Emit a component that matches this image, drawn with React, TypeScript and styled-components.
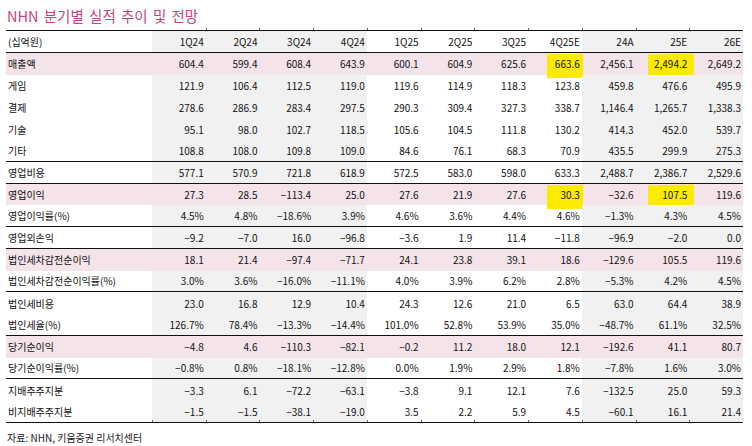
import React from "react";
import styled, { createGlobalStyle, css } from "styled-components";

const GlobalStyle = createGlobalStyle`
  body {
    margin: 0;
    background: #fff;
  }
`;

const COLS = "146px repeat(11, 1fr)";
const GRAY_COLS = [0, 1, 2, 3, 8, 9, 10];

const Page = styled.div`
  width: 752px;
  height: 446px;
  padding: 0 9px 0 6px;
  box-sizing: border-box;
  font-family: "Noto Sans CJK KR", "Noto Sans", sans-serif;
  color: #111;
  overflow: hidden;
`;

const Title = styled.h1`
  margin: 0;
  height: 28px;
  padding: 6px 0 0 1px;
  box-sizing: border-box;
  font-size: 14.5px;
  font-weight: 400;
  line-height: 20px;
  word-spacing: 2px;
  color: #c0457f;
`;

const Ticks = styled.div`
  display: grid;
  grid-template-columns: ${COLS};
  height: 2px;
`;

const Tick = styled.span<{ $on: boolean }>`
  border-left: ${({ $on }) => ($on ? "1px solid #666" : "none")};
`;

const Row = styled.div<{ $pink?: boolean; $line?: boolean; $head?: boolean; $ticks?: boolean }>`
  display: grid;
  grid-template-columns: ${COLS};
  box-sizing: border-box;
  height: ${({ $head }) => ($head ? "23px" : "21.75px")};
  background: ${({ $pink }) => ($pink ? "#f4e4ea" : "transparent")};
  border-top: ${({ $head }) => ($head ? "1px solid #111" : "none")};
  border-bottom: ${({ $line, $head }) => ($line || $head ? "1px solid #111" : "none")};
  ${({ $ticks }) =>
    $ticks &&
    css`
      & > *:not(:first-child)::after {
        content: "";
        position: absolute;
        left: 0;
        bottom: 0;
        width: 1px;
        height: 2px;
        background: #666;
      }
    `}
`;

const Label = styled.div`
  display: flex;
  align-items: center;
  padding-left: 2px;
  font-size: 10px;
  white-space: nowrap;
  position: relative;
`;

const Cell = styled.div<{ $shade: boolean; $mark?: [number, number] }>`
  position: relative;
  display: flex;
  align-items: center;
  justify-content: flex-end;
  padding-right: 2px;
  font-size: 10px;
  white-space: nowrap;
  background: ${({ $shade }) => ($shade ? "#f1f1f1" : "transparent")};
  ${({ $mark }) =>
    $mark &&
    css`
      &::before {
        content: "";
        position: absolute;
        top: 1px;
        bottom: -3px;
        left: ${$mark[0]}px;
        right: ${$mark[1]}px;
        background: #fcea00;
        border-radius: 1px;
        transform: skewY(-1deg);
      }
    `}
`;

const Num = styled.span`
  position: relative;
  z-index: 1;
`;

const Footer = styled.div`
  padding: 8px 0 0 1px;
  font-size: 10px;
  line-height: 14px;
  color: #222;
`;

const HEAD = ["1Q24", "2Q24", "3Q24", "4Q24", "1Q25", "2Q25", "3Q25", "4Q25E", "24A", "25E", "26E"];

type RowData = {
  label: string;
  values: string[];
  pink?: boolean;
  line?: boolean;
  marks?: boolean;
};

const ROWS: RowData[] = [
  { label: "매출액", pink: true, marks: true, values: ["604.4", "599.4", "608.4", "643.9", "600.1", "604.9", "625.6", "663.6", "2,456.1", "2,494.2", "2,649.2"] },
  { label: "게임", values: ["121.9", "106.4", "112.5", "119.0", "119.6", "114.9", "118.3", "123.8", "459.8", "476.6", "495.9"] },
  { label: "결제", values: ["278.6", "286.9", "283.4", "297.5", "290.3", "309.4", "327.3", "338.7", "1,146.4", "1,265.7", "1,338.3"] },
  { label: "기술", values: ["95.1", "98.0", "102.7", "118.5", "105.6", "104.5", "111.8", "130.2", "414.3", "452.0", "539.7"] },
  { label: "기타", line: true, values: ["108.8", "108.0", "109.8", "109.0", "84.6", "76.1", "68.3", "70.9", "435.5", "299.9", "275.3"] },
  { label: "영업비용", line: true, values: ["577.1", "570.9", "721.8", "618.9", "572.5", "583.0", "598.0", "633.3", "2,488.7", "2,386.7", "2,529.6"] },
  { label: "영업이익", pink: true, marks: true, values: ["27.3", "28.5", "−113.4", "25.0", "27.6", "21.9", "27.6", "30.3", "−32.6", "107.5", "119.6"] },
  { label: "영업이익률(%)", line: true, values: ["4.5%", "4.8%", "−18.6%", "3.9%", "4.6%", "3.6%", "4.4%", "4.6%", "−1.3%", "4.3%", "4.5%"] },
  { label: "영업외손익", line: true, values: ["−9.2", "−7.0", "16.0", "−96.8", "−3.6", "1.9", "11.4", "−11.8", "−96.9", "−2.0", "0.0"] },
  { label: "법인세차감전순이익", pink: true, values: ["18.1", "21.4", "−97.4", "−71.7", "24.1", "23.8", "39.1", "18.6", "−129.6", "105.5", "119.6"] },
  { label: "법인세차감전순이익률(%)", line: true, values: ["3.0%", "3.6%", "−16.0%", "−11.1%", "4.0%", "3.9%", "6.2%", "2.8%", "−5.3%", "4.2%", "4.5%"] },
  { label: "법인세비용", values: ["23.0", "16.8", "12.9", "10.4", "24.3", "12.6", "21.0", "6.5", "63.0", "64.4", "38.9"] },
  { label: "법인세율(%)", line: true, values: ["126.7%", "78.4%", "−13.3%", "−14.4%", "101.0%", "52.8%", "53.9%", "35.0%", "−48.7%", "61.1%", "32.5%"] },
  { label: "당기순이익", pink: true, values: ["−4.8", "4.6", "−110.3", "−82.1", "−0.2", "11.2", "18.0", "12.1", "−192.6", "41.1", "80.7"] },
  { label: "당기순이익률(%)", line: true, values: ["−0.8%", "0.8%", "−18.1%", "−12.8%", "0.0%", "1.9%", "2.9%", "1.8%", "−7.8%", "1.6%", "3.0%"] },
  { label: "지배주주지분", values: ["−3.3", "6.1", "−72.2", "−63.1", "−3.8", "9.1", "12.1", "7.6", "−132.5", "25.0", "59.3"] },
  { label: "비지배주주지분", line: true, values: ["−1.5", "−1.5", "−38.1", "−19.0", "3.5", "2.2", "5.9", "4.5", "−60.1", "16.1", "21.4"] },
];

// highlighter marks: column index -> [left, right] inset
const MARKS: Record<number, [number, number]> = {
  7: [19, -1],
  9: [12, -4],
};

const App = () => {
  return (
    <Page>
      <GlobalStyle />
      <Title>NHN 분기별 실적 추이 및 전망</Title>
      <Ticks>
        <Tick $on={false} />
        {HEAD.map((h, i) => (
          <Tick key={h} $on={i > 0} />
        ))}
      </Ticks>
      <Row $head>
        <Label>(십억원)</Label>
        {HEAD.map((h, i) => (
          <Cell key={h} $shade={GRAY_COLS.includes(i)}>
            <Num>{h}</Num>
          </Cell>
        ))}
      </Row>
      {ROWS.map((row, r) => (
        <Row key={row.label} $pink={row.pink} $line={row.line} $ticks={r === ROWS.length - 1}>
          <Label>{row.label}</Label>
          {row.values.map((v, i) => (
            <Cell
              key={`${row.label}-${i}`}
              $shade={!row.pink && GRAY_COLS.includes(i)}
              $mark={row.marks ? MARKS[i] : undefined}
            >
              <Num>{v}</Num>
            </Cell>
          ))}
        </Row>
      ))}
      <Footer>자료: NHN, 키움증권 리서치센터</Footer>
    </Page>
  );
};

export default App;
